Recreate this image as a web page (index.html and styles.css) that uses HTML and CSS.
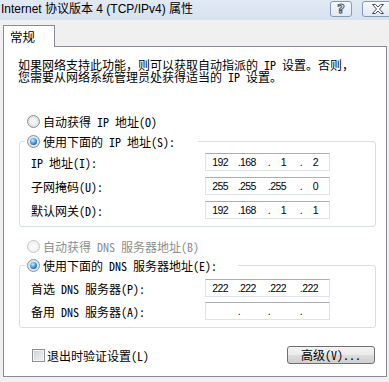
FILE: index.html
```html
<!DOCTYPE html>
<html lang="zh-CN">
<head>
<meta charset="utf-8">
<title>Internet 协议版本 4 (TCP/IPv4) 属性</title>
<link rel="stylesheet" href="styles.css">
</head>
<body>
<div class="window">
  <div class="titlebar">
    <span class="title">Internet 协议版本 4 (TCP/IPv4) 属性</span>
    <div class="caption">
      <span class="cbtn help">?</span>
      <span class="cbtn close">
        <svg width="12" height="10" viewBox="0 0 12 10"><path d="M0.5 0.5h3l2.5 2.5 2.5-2.5h3l-4 4.5 4 4.5h-3l-2.5-2.5-2.5 2.5h-3l4-4.5z" fill="#fff" stroke="#4a4f57" stroke-width="1" stroke-linejoin="round"/></svg>
      </span>
    </div>
  </div>
  <div class="client">
    <div class="tabs"><div class="tab">常规</div></div>
    <div class="panel">
      <p class="intro">如果网络支持此功能，则可以获取自动指派的 IP 设置。否则，<br>您需要从网络系统管理员处获得适当的 IP 设置。</p>

      <label class="opt opt-top"><input type="radio" name="ip" class="radio">自动获得 IP 地址(O)</label>
      <fieldset class="group group-ip">
        <legend class="legend legend-ip"><label class="opt"><input type="radio" name="ip" class="radio" checked>使用下面的 IP 地址(S):</label></legend>
        <div class="rows rows-ip">
          <div class="row"><span class="lbl">IP 地址(I):</span>
            <div class="ipbox"><span class="f1">192</span><span class="d1">.</span><span class="f2">168</span><span class="d2">.</span><span class="f3">1</span><span class="d3">.</span><span class="f4">2</span></div></div>
          <div class="row"><span class="lbl">子网掩码(U):</span>
            <div class="ipbox"><span class="f1">255</span><span class="d1">.</span><span class="f2">255</span><span class="d2">.</span><span class="f3">255</span><span class="d3">.</span><span class="f4">0</span></div></div>
          <div class="row"><span class="lbl">默认网关(D):</span>
            <div class="ipbox"><span class="f1">192</span><span class="d1">.</span><span class="f2">168</span><span class="d2">.</span><span class="f3">1</span><span class="d3">.</span><span class="f4">1</span></div></div>
        </div>
      </fieldset>

      <label class="opt opt-mid disabled"><input type="radio" name="dns" class="radio" disabled>自动获得 DNS 服务器地址(B)</label>
      <fieldset class="group group-dns">
        <legend class="legend legend-dns"><label class="opt"><input type="radio" name="dns2" class="radio" checked>使用下面的 DNS 服务器地址(E):</label></legend>
        <div class="rows rows-dns">
          <div class="row"><span class="lbl">首选 DNS 服务器(P):</span>
            <div class="ipbox"><span class="f1">222</span><span class="d1">.</span><span class="f2">222</span><span class="d2">.</span><span class="f3">222</span><span class="d3">.</span><span class="f4">222</span></div></div>
          <div class="row"><span class="lbl">备用 DNS 服务器(A):</span>
            <div class="ipbox"><span class="f1"></span><span class="d1">.</span><span class="f2"></span><span class="d2">.</span><span class="f3"></span><span class="d3">.</span><span class="f4"></span></div></div>
        </div>
      </fieldset>

      <div class="footer">
        <label class="chk"><input type="checkbox" class="checkbox">退出时验证设置(L)</label>
        <button class="adv" type="button">高级(V)...</button>
      </div>
    </div>
  </div>
</div>
</body>
</html>
```
FILE: styles.css
```css
html, body {
  margin: 0;
  padding: 0;
}
body {
  width: 389px;
  height: 382px;
  overflow: hidden;
  background: #f0f0f0;
  font-family: "Noto Sans Mono CJK SC", "Noto Sans CJK SC", sans-serif;
  font-size: 12px;
  color: #000;
}
.window {
  width: 389px;
  height: 382px;
}
.titlebar {
  height: 20px;
  background: linear-gradient(#e0e9f4, #d7e2ef);
  display: flex;
  justify-content: space-between;
  align-items: flex-start;
}
.title {
  font-family: "Liberation Sans", "Noto Sans CJK SC", sans-serif;
  font-size: 12px;
  line-height: 18px;
  padding-left: 1px;
  white-space: nowrap;
}
.caption {
  display: flex;
  gap: 10px;
  margin-top: 1px;
  margin-right: -4px;
}
.cbtn {
  height: 16px;
  box-sizing: border-box;
  border: 1px solid #8899b2;
  border-radius: 3px;
  background: linear-gradient(#f6f9fc, #e2e9f2);
  display: flex;
  align-items: center;
  justify-content: center;
}
.help {
  width: 22px;
  font-family: "DejaVu Sans", sans-serif;
  font-weight: bold;
  font-size: 13px;
  line-height: 14px;
  color: #fff;
  -webkit-text-stroke: 1px #4a4f57;
}
.close {
  width: 31px;
}
.client {
  padding-top: 5px;
}
.tabs {
  padding-left: 3px;
  display: flex;
}
.tab {
  position: relative;
  z-index: 1;
  width: 52px;
  height: 22px;
  box-sizing: border-box;
  border: 1px solid #898c95;
  border-bottom: none;
  background: #fff;
  margin-bottom: -1px;
  padding-left: 6px;
  line-height: 21px;
  font-size: 12.5px;
}
.panel {
  margin-left: 3px;
  width: 384px;
  height: 331px;
  box-sizing: border-box;
  border: 1px solid #898c95;
  background: #fff;
  padding: 12px 10px 0 14px;
}
.intro {
  margin: 0;
  line-height: 12px;
  white-space: nowrap;
}
.opt {
  display: flex;
  align-items: center;
  height: 15px;
  line-height: 15px;
  white-space: nowrap;
}
.opt-top {
  margin-top: 31px;
  padding-left: 9px;
}
.opt-mid {
  margin-top: 12px;
  padding-left: 9px;
}
.disabled {
  color: #8e8e8e;
}
.radio {
  appearance: none;
  -webkit-appearance: none;
  margin: 0 3px 0 0;
  width: 13px;
  height: 13px;
  box-sizing: border-box;
  border: 1px solid #8e8f8f;
  border-radius: 50%;
  background: radial-gradient(circle at 50% 50%, #ffffff 0, #f1f1f1 35%, #cfd0d1 100%);
  position: relative;
  flex: none;
}
.radio:checked::after {
  content: "";
  position: absolute;
  left: 2px;
  top: 2px;
  width: 7px;
  height: 7px;
  border-radius: 50%;
  background: radial-gradient(circle at 40% 35%, #d6f1ff 0, #5cb4f0 35%, #1b62b8 75%, #0d3f86 100%);
}
.radio:disabled {
  border-color: #c5c5c5;
  background: radial-gradient(circle, #fbfbfb, #ececec);
}
.group {
  margin: 0 0 0 1px;
  border: 1px solid #d5dfe5;
  border-radius: 3px;
  padding: 0 0 0 11px;
  min-width: 0;
}
.group-ip {
  margin-top: 5px;
}
.group-dns {
  margin-top: 4px;
}
.legend {
  margin-left: -6px;
  padding: 0 0 0 2px;
  height: 15px;
}
.legend-ip {
  padding-right: 23px;
}
.legend-dns {
  padding-right: 21px;
}
.rows {
  display: flex;
  flex-direction: column;
}
.rows-ip {
  padding: 4px 0 7px;
  gap: 6px;
}
.rows-dns {
  padding: 6px 0 7px;
  gap: 5px;
}
.row {
  display: grid;
  grid-template-columns: 174px 125px;
  align-items: center;
  height: 18px;
}
.lbl {
  white-space: nowrap;
  line-height: 15px;
}
.ipbox {
  height: 18px;
  box-sizing: border-box;
  border: 1px solid #dde3ea;
  border-top-color: #abadb3;
  display: flex;
  align-items: center;
  font-family: "Liberation Sans", sans-serif;
  font-size: 10.5px;
  letter-spacing: -0.6px;
  line-height: 16px;
  white-space: nowrap;
}
.ipbox span {
  display: block;
  text-align: right;
  flex: none;
}
.f1 { width: 22px; }
.d1 { width: 12px; }
.f2 { width: 14px; }
.d2 { width: 16px; }
.f3 { width: 16px; }
.d3 { width: 16px; }
.f4 { width: 16px; }
.footer {
  margin-top: 18px;
  display: flex;
  justify-content: space-between;
  align-items: center;
  padding-left: 14px;
  margin-right: 1px;
}
.chk {
  display: flex;
  align-items: center;
  white-space: nowrap;
  line-height: 15px;
}
.checkbox {
  appearance: none;
  -webkit-appearance: none;
  margin: 0 2px 0 0;
  width: 13px;
  height: 13px;
  box-sizing: border-box;
  border: 1px solid #8e8f8f;
  background: linear-gradient(135deg, #cbcfd5, #f5f6f7);
  box-shadow: inset 0 0 0 1px #f4f4f4;
  flex: none;
}
.adv {
  width: 88px;
  height: 18px;
  box-sizing: border-box;
  border: 1px solid #707070;
  border-radius: 3px;
  background: linear-gradient(#f3f3f3 0, #ebebeb 50%, #dddddd 51%, #cfcfcf 100%);
  font-family: "Noto Sans Mono CJK SC", "Noto Sans CJK SC", sans-serif;
  font-size: 12px;
  line-height: 14px;
  padding: 0;
  color: #000;
}
```
